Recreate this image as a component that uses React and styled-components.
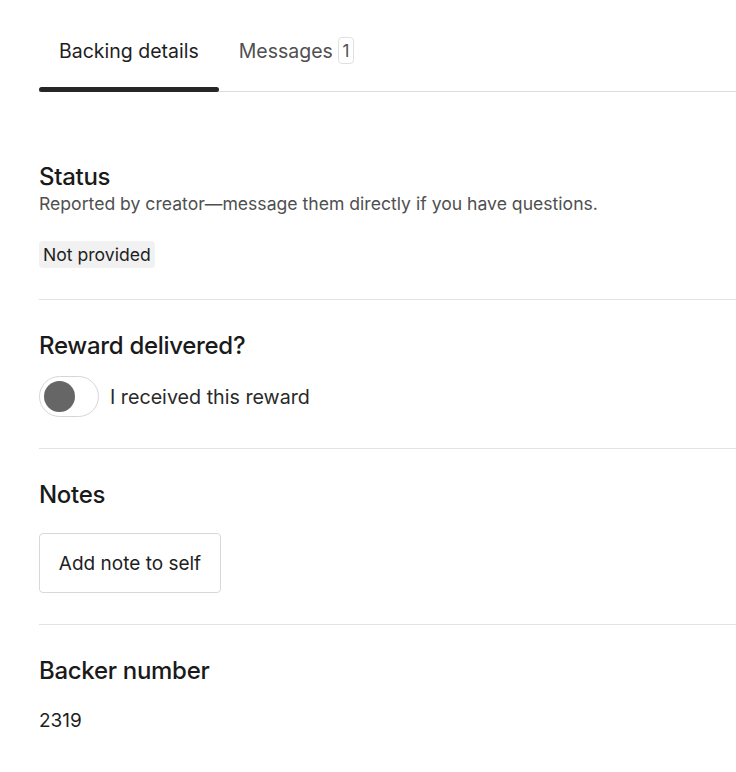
import React from "react";
import styled, { createGlobalStyle } from "styled-components";

const GlobalStyle = createGlobalStyle`
  body {
    margin: 0;
    background: #fff;
    font-family: Inter, "Noto Sans", sans-serif;
    color: #1e1e1e;
  }
`;

const Page = styled.div`
  padding: 11px 0 40px 39px;
`;

const TabBar = styled.div`
  display: flex;
  border-bottom: 1px solid #dcdcdc;
`;

const Tab = styled.div`
  position: relative;
  display: flex;
  align-items: center;
  padding: 26px 20px 27px;
  font-size: 19.5px;
  line-height: 24px;
  color: ${(p) => (p.active ? "#1e1e1e" : "#505050")};

  &::after {
    content: "";
    display: ${(p) => (p.active ? "block" : "none")};
    position: absolute;
    left: 0;
    right: 0;
    bottom: -1px;
    height: 5px;
    border-radius: 3px;
    background: #262626;
  }
`;

const Badge = styled.span`
  display: inline-flex;
  align-items: center;
  justify-content: center;
  margin-left: 5px;
  width: 16px;
  height: 27px;
  border: 1px solid #e0e0e0;
  border-radius: 4px;
  box-sizing: border-box;
  font-size: 17px;
  color: #505050;
`;

const Sections = styled.div`
  margin-top: 39px;
`;

const Section = styled.section`
  padding: 32px 0 31px;
  border-bottom: ${(p) => (p.last ? "none" : "1px solid #e3e3e3")};
`;

const Heading = styled.h2`
  margin: 0;
  font-size: 24px;
  line-height: 28px;
  font-weight: 500;
  letter-spacing: -0.3px;
  color: #1a1a1a;
`;

const Sub = styled.p`
  margin: 1px 0 0;
  font-size: 17.6px;
  line-height: 24px;
  color: #4f4f4f;
`;

const Tag = styled.span`
  display: inline-block;
  margin-top: 25px;
  padding: 0 4px;
  height: 27px;
  line-height: 27px;
  border-radius: 4px;
  background: #f1f1f1;
  font-size: 17.6px;
  font-weight: 400;
  color: #1e1e1e;
`;

const ToggleRow = styled.label`
  display: flex;
  align-items: center;
  gap: 11px;
  margin-top: 16px;
  font-size: 19.7px;
  color: #2a2a2a;
`;

const Switch = styled.span`
  display: flex;
  align-items: center;
  width: 60px;
  height: 41px;
  box-sizing: border-box;
  padding-left: 4px;
  border: 1px solid #d6d6d6;
  border-radius: 21px;
`;

const Knob = styled.span`
  width: 31px;
  height: 31px;
  border-radius: 50%;
  background: #666;
`;

const Button = styled.button`
  display: block;
  margin-top: 24px;
  width: 182px;
  height: 60px;
  padding: 0;
  border: 1px solid #d8d8d8;
  border-radius: 4px;
  background: #fff;
  font-family: inherit;
  font-size: 19px;
  font-weight: 400;
  color: #1e1e1e;
  cursor: pointer;
`;

const Value = styled.div`
  margin-top: 24px;
  font-size: 19px;
  line-height: 24px;
  color: #1e1e1e;
`;

export default function App() {
  return (
    <Page>
      <GlobalStyle />
      <TabBar>
        <Tab active>Backing details</Tab>
        <Tab>
          Messages<Badge>1</Badge>
        </Tab>
      </TabBar>
      <Sections>
        <Section>
          <Heading>Status</Heading>
          <Sub>Reported by creator—message them directly if you have questions.</Sub>
          <Tag>Not provided</Tag>
        </Section>
        <Section>
          <Heading>Reward delivered?</Heading>
          <ToggleRow>
            <Switch>
              <Knob />
            </Switch>
            I received this reward
          </ToggleRow>
        </Section>
        <Section>
          <Heading>Notes</Heading>
          <Button>Add note to self</Button>
        </Section>
        <Section last>
          <Heading>Backer number</Heading>
          <Value>2319</Value>
        </Section>
      </Sections>
    </Page>
  );
}
